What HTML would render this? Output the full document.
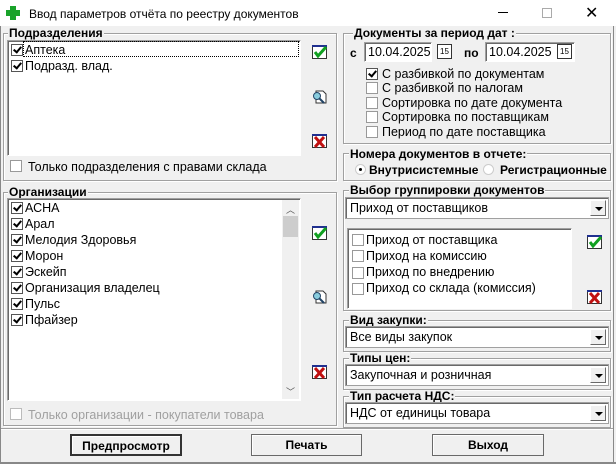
<!DOCTYPE html><html><head><meta charset="utf-8"><style>
*{margin:0;padding:0;box-sizing:border-box}
body{width:616px;height:464px;background:#f0f0f0;font-family:"Liberation Sans",sans-serif;font-size:12px;color:#000;position:relative;overflow:hidden}
.a{position:absolute;white-space:nowrap}
.t{position:absolute;left:0;top:0;width:616px;height:26px;background:#fff}
.fr{position:absolute;border:1px solid #a0a0a0;box-shadow:1px 1px 0 #fff inset,1px 1px 0 #fff}
.lb{position:absolute;font-weight:bold;background:#f0f0f0;padding:0 1px;line-height:13px;font-size:12px}
.box{position:absolute;background:#fff;border:1px solid #a0a0a0;border-right-color:#fff;border-bottom-color:#fff;box-shadow:inset 1px 1px 0 #696969}
.cb{position:absolute;width:12px;height:12px;border:1px solid #555;background:#fff}
.cb.c::after{content:"";position:absolute;left:3px;top:0px;width:3px;height:6px;border:solid #000;border-width:0 2px 2px 0;transform:rotate(40deg)}
.cbg{position:absolute;width:12px;height:12px;border:1px solid #999;background:#fff}
.cmb{position:absolute;background:#fff;border:1px solid #a0a0a0;box-shadow:inset 1px 1px 0 #696969;height:22px;padding:3px 0 0 4px}
.cmb .ar{position:absolute;right:2px;top:2px;width:16px;height:16px;background:#f0f0f0;border:1px solid #fff;border-right-color:#696969;border-bottom-color:#696969}
.cmb .ar::after{content:"";position:absolute;left:4px;top:6px;border-left:4px solid transparent;border-right:4px solid transparent;border-top:4px solid #000}
.btn{position:absolute;height:22px;border:1px solid #696969;background:#f0f0f0;box-shadow:inset 1px 1px 0 #fff;font-weight:bold;text-align:center;line-height:20px;font-size:12px}
.ic{position:absolute;width:16px;height:14px}
</style></head><body>
<div class="t"></div>
<div class="a" style="left:6px;top:6px;width:14px;height:14px"><div style="position:absolute;left:4px;top:0;width:6px;height:14px;background:#1aa32a"></div><div style="position:absolute;left:0;top:4px;width:14px;height:6px;background:#1aa32a"></div></div>
<div class="a" style="left:29px;top:7px;font-size:12px">Ввод параметров отчёта по реестру документов</div>
<div class="a" style="left:498px;top:12px;width:10px;height:1px;background:#000"></div>
<div class="a" style="left:542px;top:8px;width:10px;height:10px;border:1px solid #aaa"></div>
<div class="a" style="left:585px;top:3px;font-size:16px">✕</div>
<div class="a" style="left:613px;top:26px;width:1px;height:438px;background:#888"></div>
<div class="a" style="left:0;top:26px;width:1px;height:438px;background:#888"></div>

<div class="fr" style="left:3px;top:33px;width:334px;height:148px"></div>
<div class="lb" style="left:8px;top:27px">Подразделения</div>
<div class="box" style="left:7px;top:40px;width:294px;height:116px"></div>
<div class="a" style="left:23px;top:41px;width:276px;height:16px;border:1px dotted #000"></div>
<div class="cb c" style="left:11px;top:44px"></div><div class="a" style="left:25px;top:43px;font-size:12.5px">Аптека</div>
<div class="cb c" style="left:11px;top:60px"></div><div class="a" style="left:25px;top:59px;font-size:12.5px">Подразд. влад.</div>
<div class="cbg" style="left:10px;top:160px"></div><div class="a" style="left:28px;top:160px;font-size:12.5px">Только подразделения с правами склада</div>

<div class="fr" style="left:3px;top:192px;width:334px;height:234px"></div>
<div class="lb" style="left:8px;top:186px">Организации</div>
<div class="box" style="left:7px;top:198px;width:294px;height:203px"></div>
<div class="a" style="left:282px;top:200px;width:17px;height:199px;background:#f0f0f0"></div>
<div class="a" style="left:283px;top:216px;width:15px;height:21px;background:#cdcdcd"></div>
<div class="a" style="left:286px;top:203px;font-size:9px;color:#555">︿</div>
<div class="a" style="left:286px;top:385px;font-size:9px;color:#555">﹀</div>
<div class="cb c" style="left:11px;top:202px"></div><div class="a" style="left:25px;top:201px;font-size:12.5px">АСНА</div>
<div class="cb c" style="left:11px;top:218px"></div><div class="a" style="left:25px;top:217px;font-size:12.5px">Арал</div>
<div class="cb c" style="left:11px;top:234px"></div><div class="a" style="left:25px;top:233px;font-size:12.5px">Мелодия Здоровья</div>
<div class="cb c" style="left:11px;top:250px"></div><div class="a" style="left:25px;top:249px;font-size:12.5px">Морон</div>
<div class="cb c" style="left:11px;top:266px"></div><div class="a" style="left:25px;top:265px;font-size:12.5px">Эскейп</div>
<div class="cb c" style="left:11px;top:282px"></div><div class="a" style="left:25px;top:281px;font-size:12.5px">Организация владелец</div>
<div class="cb c" style="left:11px;top:298px"></div><div class="a" style="left:25px;top:297px;font-size:12.5px">Пульс</div>
<div class="cb c" style="left:11px;top:314px"></div><div class="a" style="left:25px;top:313px;font-size:12.5px">Пфайзер</div>
<div class="cbg" style="left:10px;top:408px;border-color:#bbb"></div><div class="a" style="left:28px;top:408px;color:#a0a0a0;font-size:12.5px">Только организации - покупатели товара</div>

<svg width="0" height="0" style="position:absolute"><defs>
<symbol id="ok" viewBox="0 0 16 14"><rect x="0.5" y="0.5" width="14" height="13" fill="#fff" stroke="#333"/><rect x="0" y="0" width="15" height="2" fill="#203090"/><path d="M3 7 L6 11 L14 2" stroke="#10a020" stroke-width="3" fill="none"/></symbol>
<symbol id="no" viewBox="0 0 16 14"><rect x="0.5" y="0.5" width="14" height="13" fill="#fff" stroke="#333"/><rect x="0" y="0" width="15" height="2" fill="#203090"/><path d="M3 3 L12 13 M12 3 L3 13" stroke="#c01010" stroke-width="3"/></symbol>
<symbol id="fd" viewBox="0 0 16 14"><path d="M4 1 H11 L14 4 V13 H4 Z" fill="#fff" stroke="#333"/><circle cx="5" cy="6" r="3.5" fill="#8cd" stroke="#246"/><path d="M7 8 L12 13" stroke="#246" stroke-width="2"/></symbol>
</defs></svg>
<svg class="ic" style="left:312px;top:45px"><use href="#ok"/></svg>
<svg class="ic" style="left:312px;top:90px"><use href="#fd"/></svg>
<svg class="ic" style="left:312px;top:134px"><use href="#no"/></svg>
<svg class="ic" style="left:312px;top:226px"><use href="#ok"/></svg>
<svg class="ic" style="left:312px;top:290px"><use href="#fd"/></svg>
<svg class="ic" style="left:312px;top:365px"><use href="#no"/></svg>
<svg class="ic" style="left:587px;top:235px"><use href="#ok"/></svg>
<svg class="ic" style="left:587px;top:290px"><use href="#no"/></svg>

<div class="fr" style="left:343px;top:33px;width:268px;height:111px"></div>
<div class="lb" style="left:353px;top:27px">Документы за период дат :</div>
<div class="a" style="left:350px;top:46px;font-weight:bold">с</div>
<div class="box" style="left:364px;top:42px;width:68px;height:20px;padding:2px 0 0 3px;font-size:12.5px">10.04.2025</div>
<div class="a" style="left:437px;top:44px;width:15px;height:15px;border:1px solid #333;font-size:8px;text-align:center;line-height:13px;background:#fff">15</div>
<div class="a" style="left:464px;top:46px;font-weight:bold">по</div>
<div class="box" style="left:485px;top:42px;width:90px;height:20px;padding:2px 0 0 3px;font-size:12.5px">10.04.2025</div>
<div class="a" style="left:557px;top:44px;width:15px;height:15px;border:1px solid #333;font-size:8px;text-align:center;line-height:13px;background:#fff">15</div>
<div class="cb c" style="left:366px;top:68px"></div><div class="a" style="left:382px;top:67px;font-size:12.5px">С разбивкой по документам</div>
<div class="cbg" style="left:366px;top:82px"></div><div class="a" style="left:382px;top:81px;font-size:12.5px">С разбивкой по налогам</div>
<div class="cbg" style="left:366px;top:97px"></div><div class="a" style="left:382px;top:96px;font-size:12.5px">Сортировка по дате документа</div>
<div class="cbg" style="left:366px;top:111px"></div><div class="a" style="left:382px;top:110px;font-size:12.5px">Сортировка по поставщикам</div>
<div class="cbg" style="left:366px;top:126px"></div><div class="a" style="left:382px;top:125px;font-size:12.5px">Период по дате поставщика</div>

<div class="fr" style="left:343px;top:153px;width:268px;height:28px"></div>
<div class="lb" style="left:349px;top:148px">Номера документов в отчете:</div>
<div class="a" style="left:355px;top:164px;width:11px;height:11px;border-radius:50%;background:#fff;border:1px solid #ccc"><div style="position:absolute;left:3px;top:3px;width:3px;height:3px;border-radius:50%;background:#000"></div></div>
<div class="a" style="left:369px;top:163px;font-weight:bold">Внутрисистемные</div>
<div class="a" style="left:483px;top:164px;width:11px;height:11px;border-radius:50%;background:#fff;border:1px solid #ccc"></div>
<div class="a" style="left:500px;top:163px;font-weight:bold">Регистрационные</div>

<div class="fr" style="left:343px;top:190px;width:268px;height:121px"></div>
<div class="lb" style="left:349px;top:184px">Выбор группировки документов</div>
<div class="cmb" style="left:345px;top:197px;width:264px;font-size:12.5px">Приход от поставщиков<div class="ar"></div></div>
<div class="box" style="left:347px;top:228px;width:225px;height:81px"></div>
<div class="cbg" style="left:352px;top:234px"></div><div class="a" style="left:366px;top:233px;font-size:12.5px">Приход от поставщика</div>
<div class="cbg" style="left:352px;top:250px"></div><div class="a" style="left:366px;top:249px;font-size:12.5px">Приход на комиссию</div>
<div class="cbg" style="left:352px;top:267px"></div><div class="a" style="left:366px;top:265px;font-size:12.5px">Приход по внедрению</div>
<div class="cbg" style="left:352px;top:283px"></div><div class="a" style="left:366px;top:281px;font-size:12.5px">Приход со склада (комиссия)</div>

<div class="fr" style="left:343px;top:320px;width:268px;height:32px"></div>
<div class="lb" style="left:349px;top:314px">Вид закупки:</div>
<div class="cmb" style="left:345px;top:326px;width:264px;font-size:12.5px">Все виды закупок<div class="ar"></div></div>
<div class="fr" style="left:343px;top:358px;width:268px;height:32px"></div>
<div class="lb" style="left:349px;top:352px">Типы цен:</div>
<div class="cmb" style="left:345px;top:364px;width:264px;font-size:12.5px">Закупочная и розничная<div class="ar"></div></div>
<div class="fr" style="left:343px;top:396px;width:268px;height:32px"></div>
<div class="lb" style="left:349px;top:390px">Тип расчета НДС:</div>
<div class="cmb" style="left:345px;top:402px;width:264px;font-size:12.5px">НДС от единицы товара<div class="ar"></div></div>

<div class="a" style="left:1px;top:428px;width:612px;height:1px;background:#a0a0a0"></div>
<div class="a" style="left:1px;top:429px;width:612px;height:1px;background:#fff"></div>
<div class="btn" style="left:70px;top:434px;width:112px;border:2px solid #333">Предпросмотр</div>
<div class="btn" style="left:251px;top:434px;width:111px">Печать</div>
<div class="btn" style="left:432px;top:434px;width:112px">Выход</div>
<div class="a" style="left:0;top:462px;width:616px;height:2px;background:#888"></div>
</body></html>
